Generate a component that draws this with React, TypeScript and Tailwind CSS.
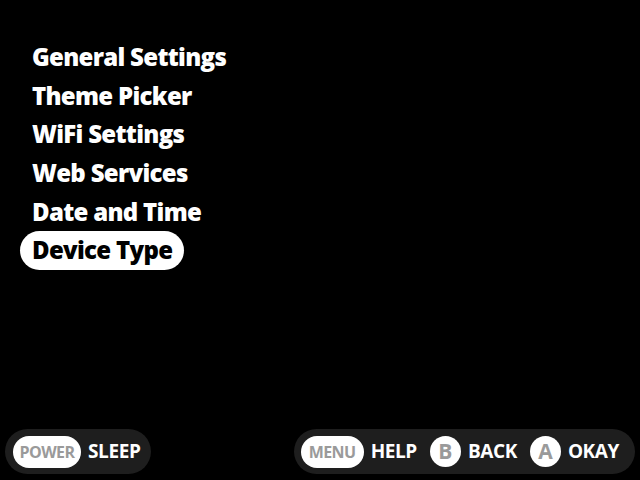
import React from 'react'

const items = ['General Settings', 'Theme Picker', 'WiFi Settings', 'Web Services', 'Date and Time', 'Device Type']
const selected = 5

const Hint = ({ pill, label, w, round }: { pill: string; label: string; w: string; round?: boolean }) => (
  <div className="flex items-center gap-[7px]">
    <div
      className={
        round
          ? 'w-[31px] h-[31px] rounded-full bg-white text-[#9a9a9a] flex items-center justify-center text-[21px]'
          : `${w} h-[32px] rounded-full bg-white text-[#9a9a9a] flex items-center justify-center text-[16px] tracking-[-0.6px]`
      }
    >
      {pill}
    </div>
    <span className="text-white text-[19px] tracking-[-0.4px]">{label}</span>
  </div>
)

const App = () => {
  return (
    <div
      className="w-[640px] h-[480px] bg-black flex flex-col font-bold"
      style={{ fontFamily: '"Open Sans", sans-serif' }}
    >
      <ul className="pt-[38px] pl-[20px] flex flex-col flex-1">
        {items.map((it, i) => (
          <li key={it} className="h-[38.6px] flex items-center">
            <span
              className={
                i === selected
                  ? 'h-[39px] px-[12px] rounded-full bg-white text-black flex items-center text-[24px] font-extrabold tracking-[-0.7px]'
                  : 'px-[12px] text-white text-[24px] font-extrabold tracking-[-0.7px]'
              }
            >
              {it}
            </span>
          </li>
        ))}
      </ul>
      <div className="flex justify-between items-center px-[5px] pb-[6px]">
        <div className="h-[45px] rounded-full bg-[#1e1e1e] flex items-center pl-[8px] pr-[11px]">
          <Hint pill="POWER" label="SLEEP" w="w-[68px]" />
        </div>
        <div className="h-[45px] rounded-full bg-[#1e1e1e] flex items-center pl-[7px] pr-[16px] gap-[13px]">
          <Hint pill="MENU" label="HELP" w="w-[63px]" />
          <Hint pill="B" label="BACK" w="" round />
          <Hint pill="A" label="OKAY" w="" round />
        </div>
      </div>
    </div>
  )
}

export default App
